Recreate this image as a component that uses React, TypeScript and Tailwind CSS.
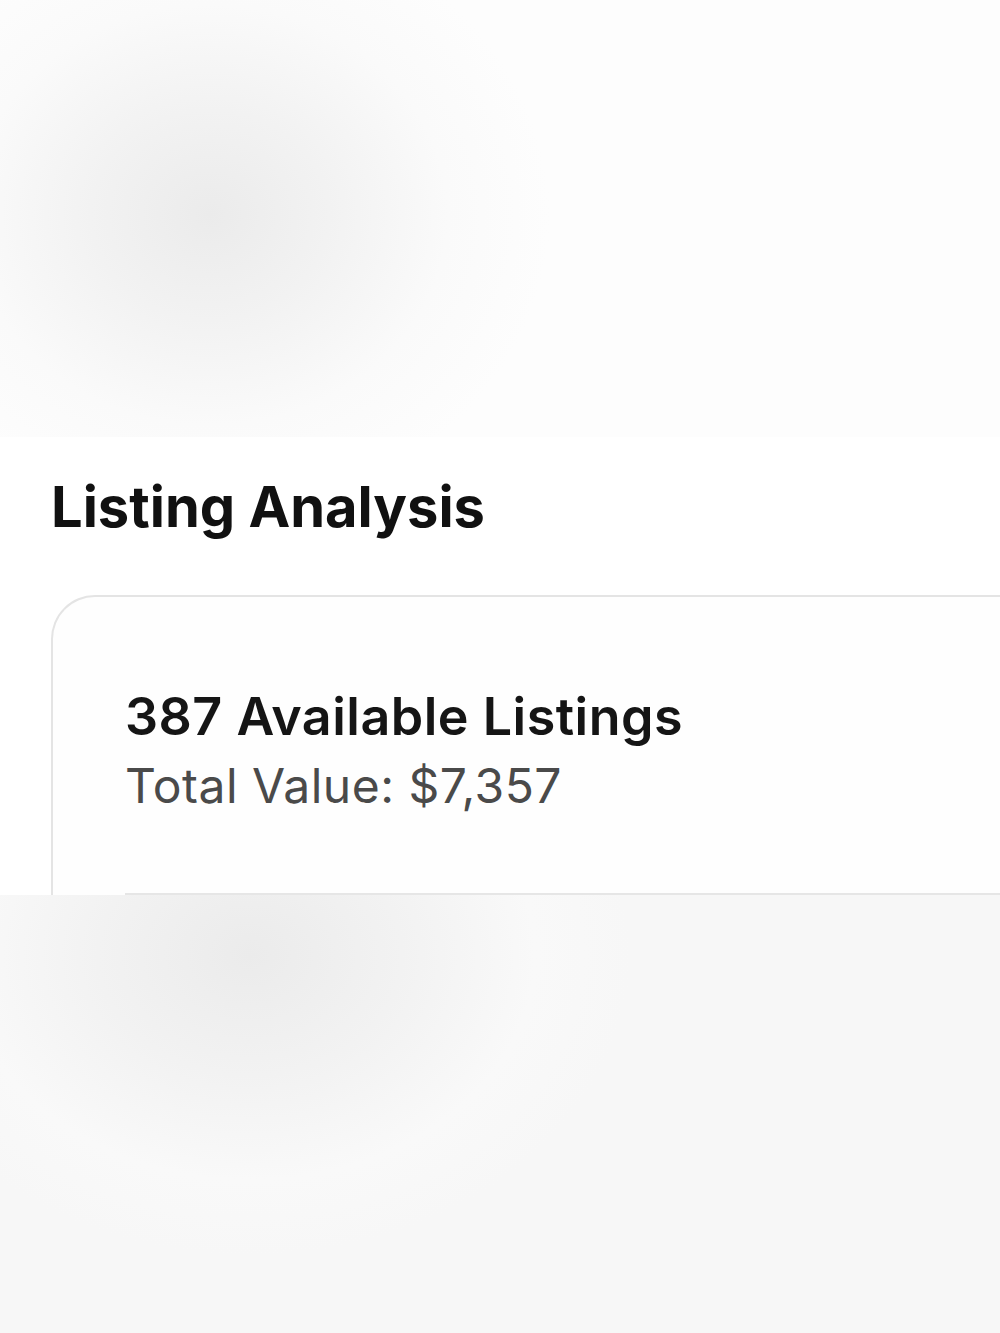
export default function App() {
  return (
    <div className="w-[1000px] h-[1333px] overflow-hidden bg-white flex flex-col" style={{ fontFamily: 'Inter, "Liberation Sans", sans-serif' }}>
      {/* blurred top area */}
      <div className="h-[437px] shrink-0 bg-[radial-gradient(ellipse_340px_300px_at_210px_215px,#ebebeb_0%,#f2f2f2_35%,#fafafa_70%,#fdfdfd_100%)]" />

      {/* sharp section */}
      <div className="h-[458px] shrink-0 bg-white pl-[51px] pt-[38px] flex flex-col">
        <h2 className="text-[56px] leading-[64px] font-bold text-[#111]">Listing Analysis</h2>
        <div className="mt-[56px] flex-1 rounded-tl-[44px] border-l-2 border-t-2 border-[#e4e4e4] bg-[#fefefe] pl-[72px] pt-[90px] flex flex-col">
          <div className="text-[52px] leading-[60px] font-semibold text-[#151515] tracking-[0.5px]">387 Available Listings</div>
          <div className="mt-[10px] text-[48px] leading-[58px] font-normal text-[#4a4a4a] tracking-[0.5px]">Total Value: $7,357</div>
          <div className="mt-auto h-[2px] bg-[#e6e6e6]" />
        </div>
      </div>

      {/* blurred bottom area */}
      <div className="flex-1 bg-[radial-gradient(ellipse_380px_300px_at_250px_60px,#ebebeb_0%,#f2f2f2_40%,#f9f9f9_75%,#f7f7f7_100%)]" />
    </div>
  );
}
